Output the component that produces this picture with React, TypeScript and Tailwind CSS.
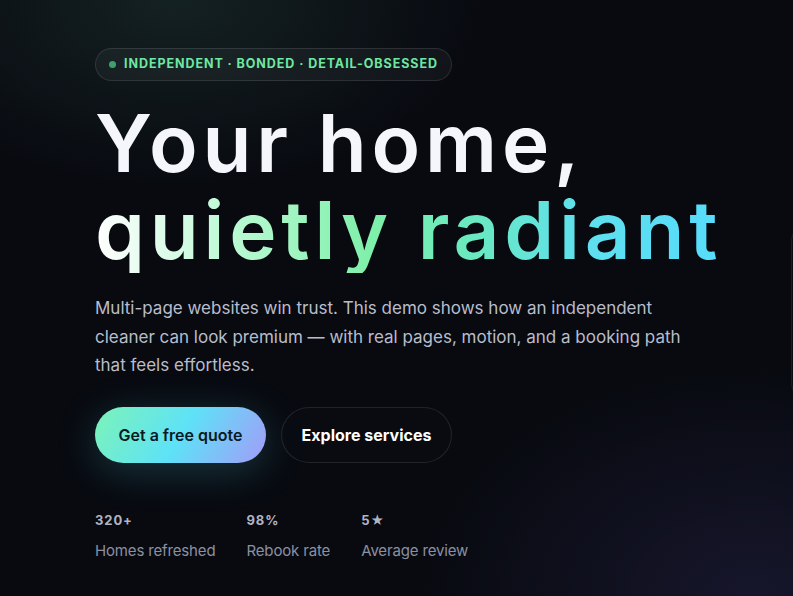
import React from "react";

const stats = [
  { value: "320+", label: "Homes refreshed" },
  { value: "98%", label: "Rebook rate" },
  { value: "5★", label: "Average review" },
];

export default function App() {
  return (
    <div
      className="relative w-full h-[596px] overflow-hidden bg-[#080a10]"
      style={{ fontFamily: "Inter, 'Noto Sans', sans-serif" }}
    >
      <div className="absolute inset-0 bg-[radial-gradient(ellipse_55%_45%_at_22%_0%,rgba(30,52,50,0.55),transparent_70%)]" />
      <div className="absolute inset-0 bg-[radial-gradient(ellipse_60%_55%_at_95%_100%,rgba(32,30,62,0.6),transparent_70%)]" />
      <div className="relative flex pl-[95px] pt-[48px]">
        <div className="w-[696px] shrink-0 flex flex-col">
          <div className="self-start flex items-center gap-[8px] h-[33px] pl-[13px] pr-[13px] rounded-full border border-white/10 bg-white/[0.04]">
            <span className="w-[7px] h-[7px] rounded-full bg-[#3ea06d]" />
            <span className="text-[12.5px] font-bold tracking-[0.075em] text-[#6ee7a3] leading-none">
              INDEPENDENT · BONDED · DETAIL-OBSESSED
            </span>
          </div>
          <h1 className="mt-[18px] text-[80px] leading-[87px] font-semibold tracking-[0.06em] text-[#f4f6fb]">
            <span className="block">Your home,</span>
            <span className="block bg-[linear-gradient(90deg,#ffffff_0%,#b4f8cf_24%,#7ff0aa_44%,#6ae9c0_60%,#5ee0ee_78%,#57dcfc_100%)] bg-clip-text text-transparent w-fit">
              quietly radiant
            </span>
          </h1>
          <p className="mt-[21px] max-w-[605px] text-[17px] leading-[28.5px] text-[#b9bdcb]">
            Multi-page websites win trust. This demo shows how an independent cleaner can look premium — with real pages, motion, and a booking path that feels effortless.
          </p>
          <div className="mt-[27px] flex gap-[15px]">
            <button className="h-[56px] w-[171px] rounded-full bg-[linear-gradient(120deg,#7cf3b8_0%,#5ee2f7_50%,#a39bf7_100%)] text-[16px] font-semibold text-[#0c1a24] shadow-[0_8px_40px_rgba(80,210,230,0.22)]">
              Get a free quote
            </button>
            <button className="h-[56px] w-[171px] rounded-full border border-white/10 bg-[#0a0b12]/60 text-[16px] font-bold text-white">
              Explore services
            </button>
          </div>
          <div className="mt-[49px] flex gap-[31px]">
            {stats.map((s) => (
              <div key={s.label} className="flex flex-col">
                <span className="text-[13px] font-bold tracking-[0.07em] text-[#b0b4c3] leading-[16px]">
                  {s.value}
                </span>
                <span className="mt-[14px] text-[15px] text-[#8b90a3] leading-[18px] tracking-[-0.01em]">
                  {s.label}
                </span>
              </div>
            ))}
          </div>
        </div>
        <div className="shrink-0 mt-[177px] w-[300px] h-[174px] rounded-2xl border border-white/[0.07] bg-white/[0.01]" />
      </div>
    </div>
  );
}
